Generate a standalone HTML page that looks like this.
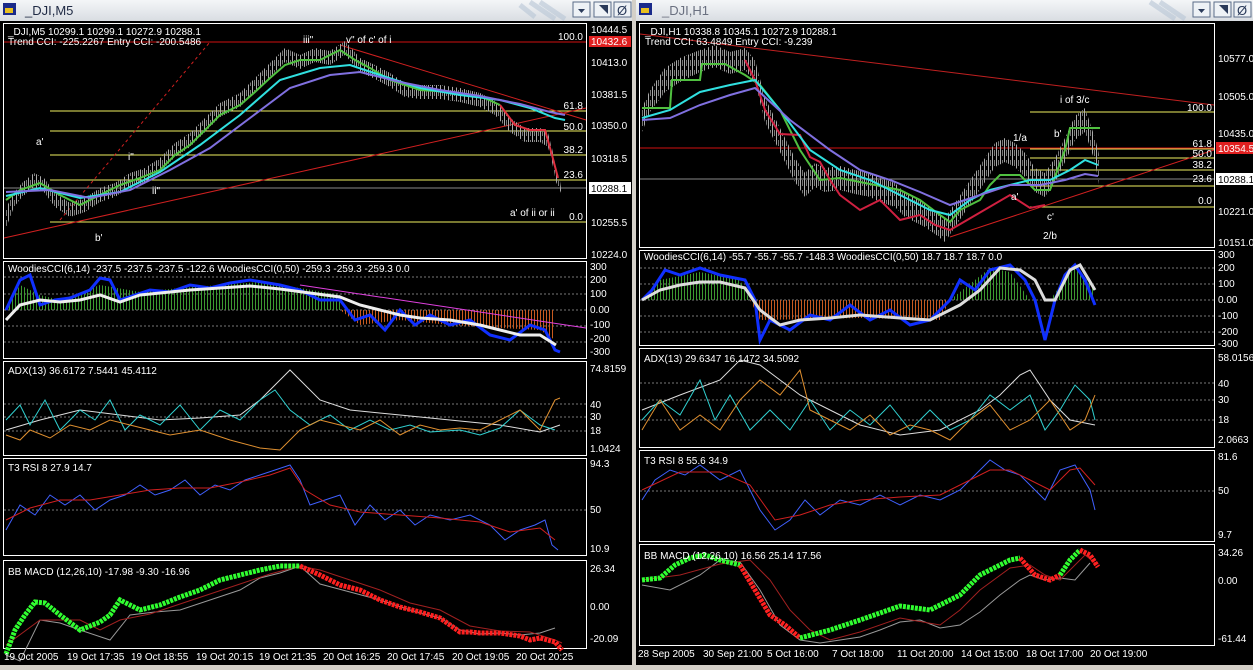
<!DOCTYPE html><html><head><meta charset="utf-8"><style>
body{margin:0;background:#d4d0c8;width:1253px;height:665px;overflow:hidden;font-family:"Liberation Sans",sans-serif}
svg text{font-family:"Liberation Sans",sans-serif;font-size:10px;fill:#fff}
</style></head><body>
<svg width="1253" height="665" viewBox="0 0 1253 665" xmlns="http://www.w3.org/2000/svg">
<defs><linearGradient id="tb" x1="0" y1="0" x2="0" y2="1"><stop offset="0" stop-color="#f4f6f8"/><stop offset="1" stop-color="#d9dde2"/></linearGradient>
<pattern id="pg" width="3" height="10" patternUnits="userSpaceOnUse"><rect width="1" height="10" fill="#3c9a30"/></pattern>
<pattern id="po" width="3" height="10" patternUnits="userSpaceOnUse"><rect width="1" height="10" fill="#c85a20"/></pattern>
<pattern id="pc" width="4" height="10" patternUnits="userSpaceOnUse"><rect width="1" height="10" fill="#aaa"/><rect x="2" y="0" width="1" height="6" fill="#777"/></pattern>
</defs>
<rect x="0" y="0" width="634" height="21" fill="url(#tb)"/>
<rect x="636" y="0" width="617" height="21" fill="url(#tb)"/>
<rect x="3" y="3" width="13" height="12" fill="#1a2a8a"/><rect x="5" y="8" width="8" height="5" fill="#e8c020"/>
<rect x="639" y="3" width="13" height="12" fill="#1a2a8a"/><rect x="641" y="8" width="8" height="5" fill="#e8c020"/>
<text x="25" y="15" style="font-size:13px;fill:#1f2a44">_DJI,M5</text>
<text x="662" y="15" style="font-size:13px;fill:#6a7080">_DJI,H1</text>
<g fill="#eef2f6" stroke="#5a6c88"><rect x="573" y="2" width="17" height="15"/><rect x="594" y="2" width="17" height="15"/><rect x="614" y="2" width="17" height="15"/>
<rect x="1193" y="2" width="17" height="15"/><rect x="1214" y="2" width="17" height="15"/><rect x="1234" y="2" width="17" height="15"/></g>
<g fill="#2a3a5a"><path d="M578 9h7l-3.5 4z"/><path d="M599 5h9v9z" /><path d="M1198 9h7l-3.5 4z"/><path d="M1219 5h9v9z"/></g>
<text x="617" y="15" style="fill:#2a3a5a;font-size:13px">Ø</text><text x="1237" y="15" style="fill:#2a3a5a;font-size:13px">Ø</text>
<path d="M530 2l25 17M540 2l25 17M520 5l15 12" stroke="#b8c6d6" stroke-width="5" opacity=".6"/>
<path d="M1150 2l25 17M1160 2l25 17" stroke="#b8c6d6" stroke-width="5" opacity=".6"/>
<rect x="0" y="21" width="634" height="644" fill="#000"/>
<rect x="636" y="21" width="617" height="644" fill="#000"/>
<rect x="632" y="0" width="4" height="665" fill="#d4d0c8"/>
<g fill="none" stroke="#fff" stroke-width="1">
<rect x="3.5" y="23.5" width="583" height="235"/><rect x="3.5" y="261.5" width="583" height="97"/><rect x="3.5" y="361.5" width="583" height="94"/><rect x="3.5" y="458.5" width="583" height="97"/><rect x="3.5" y="560.5" width="583" height="88"/>
<rect x="639.5" y="23.5" width="575" height="224"/><rect x="639.5" y="250.5" width="575" height="95"/><rect x="639.5" y="348.5" width="575" height="99"/><rect x="639.5" y="450.5" width="575" height="91"/><rect x="639.5" y="544.5" width="575" height="101"/>
</g>
<!-- LEFT MAIN -->
<g stroke-width="1" fill="none">
<line x1="4" y1="42" x2="586" y2="42" stroke="#d01010"/>
<g stroke="#f0f060"><line x1="50" y1="111" x2="586" y2="111"/><line x1="50" y1="131" x2="586" y2="131"/><line x1="50" y1="155" x2="586" y2="155"/><line x1="50" y1="180" x2="586" y2="180"/><line x1="50" y1="222" x2="586" y2="222"/></g>
<line x1="4" y1="188" x2="586" y2="188" stroke="#888"/>
<line x1="4" y1="238" x2="586" y2="108" stroke="#d02020"/>
<line x1="60" y1="220" x2="210" y2="42" stroke="#d02020" stroke-dasharray="3,3"/>
<line x1="340" y1="45" x2="586" y2="120" stroke="#d02020"/>
</g>
<polygon fill="url(#pc)" points="6,208 14,193 22,183 34,173 44,178 55,193 70,203 85,198 100,188 115,183 130,173 145,168 160,158 175,143 190,133 205,118 220,103 240,93 255,78 270,63 285,48 300,55 315,48 330,51 345,41 360,58 375,65 390,73 405,83 420,85 440,85 460,88 480,93 495,101 510,118 525,128 540,128 548,133 552,148 556,168 560,181 562,195 556,182 552,162 548,147 540,142 525,142 510,132 495,115 480,107 460,102 440,99 420,99 405,97 390,87 375,79 360,72 345,55 330,65 315,62 300,69 285,62 270,77 255,92 240,107 220,117 205,132 190,147 175,157 160,172 145,182 130,187 115,197 100,202 85,212 70,217 55,207 44,192 34,187 22,197 14,207 6,228"/>
<g stroke-width="1" fill="none">
<polyline stroke="#50c040" stroke-width="2" points="6,200 20,190 40,183 60,195 80,205 100,195 120,185 140,178 160,170 175,155 190,145 205,130 220,115 240,105 255,92 270,78 285,65 300,60 320,60 340,50 355,60 370,68 390,80 420,90 450,92 480,96 500,105"/>
<polyline stroke="#e03040" stroke-width="2" points="500,105 515,125 530,130 545,130 552,155 558,178"/>
<polyline stroke="#30e0e0" stroke-width="2" points="6,196 40,188 80,198 120,192 160,172 200,145 240,115 280,80 320,68 350,65 380,75 420,88 460,95 500,100 530,108 555,118 565,120"/>
<polyline stroke="#8070e0" stroke-width="2" points="6,192 50,190 90,198 130,190 170,170 210,148 250,118 290,88 330,75 360,72 400,82 440,90 480,96 520,104 550,112 565,115"/>
</g>
<text x="8" y="35">_DJI,M5  10299.1 10299.1 10272.9 10288.1</text>
<text x="8" y="45">Trend CCI: -225.2267 Entry CCI: -200.5486</text>
<g style="font-size:13px;fill:#888"><text x="303" y="43">iii"</text><text x="346" y="43">v" of c' of i</text><text x="36" y="145">a'</text><text x="95" y="241">b'</text><text x="128" y="160">i"</text><text x="152" y="194">ii"</text><text x="510" y="216">a' of ii or ii</text></g>
<g style="font-size:9px" text-anchor="end"><text x="583" y="40">100.0</text><text x="583" y="109">61.8</text><text x="583" y="130">50.0</text><text x="583" y="153">38.2</text><text x="583" y="178">23.6</text><text x="583" y="220">0.0</text></g>
<rect x="589" y="36" width="42" height="11" fill="#e02020"/><rect x="589" y="182" width="42" height="12" fill="#fff"/>
<g style="font-size:10px"><text x="591" y="33">10444.5</text><text x="591" y="45">10432.6</text><text x="591" y="66">10413.0</text><text x="591" y="98">10381.5</text><text x="591" y="129">10350.0</text><text x="591" y="162">10318.5</text><text x="591" y="192" style="fill:#000">10288.1</text><text x="591" y="226">10255.5</text><text x="591" y="258">10224.0</text></g>
<!-- LEFT WOODIES -->
<g stroke="#777" stroke-dasharray="2,2"><line x1="4" y1="277" x2="586" y2="277"/><line x1="4" y1="294" x2="586" y2="294"/><line x1="4" y1="310" x2="586" y2="310"/><line x1="4" y1="326" x2="586" y2="326"/><line x1="4" y1="342" x2="586" y2="342"/></g>
<path d="M6 310L20 285L40 295L60 300L100 285L140 292L180 288L220 285L260 282L300 288L340 295L340 310Z" fill="url(#pg)"/>
<path d="M340 310L360 325L400 320L450 325L500 328L540 330L555 340L555 310Z" fill="url(#po)"/>
<line x1="300" y1="285" x2="586" y2="328" stroke="#e040e0"/>
<polyline fill="none" stroke="#1030ff" stroke-width="3" points="6,310 20,280 30,275 40,305 55,300 70,298 90,290 100,278 110,280 120,300 135,295 150,290 170,292 190,285 210,288 230,283 250,280 280,285 300,290 320,300 340,300 355,320 370,315 385,330 400,310 415,325 430,315 450,325 470,320 490,335 510,340 530,325 545,330 555,350 560,352"/>
<polyline fill="none" stroke="#eee" stroke-width="3" points="6,320 20,305 40,300 60,302 80,300 100,295 120,302 140,295 160,293 190,290 220,288 250,286 280,289 310,293 340,297 360,305 380,310 400,315 420,318 450,320 480,325 500,330 520,335 540,335 556,345"/>
<text x="8" y="272">WoodiesCCI(6,14) -237.5 -237.5 -237.5 -122.6  WoodiesCCI(0,50) -259.3 -259.3 -259.3 0.0</text>
<g style="font-size:9px"><text x="590" y="270">300</text><text x="590" y="283">200</text><text x="590" y="297">100</text><text x="590" y="313">0.00</text><text x="590" y="328">-100</text><text x="590" y="342">-200</text><text x="590" y="355">-300</text></g>
<!-- LEFT ADX -->
<g stroke="#777" stroke-dasharray="2,2"><line x1="4" y1="404" x2="586" y2="404"/><line x1="4" y1="417" x2="586" y2="417"/><line x1="4" y1="431" x2="586" y2="431"/></g>
<polyline fill="none" stroke="#ddd" points="6,430 40,420 80,410 120,415 160,420 200,418 240,415 260,400 275,385 290,370 300,380 320,400 350,410 400,415 450,420 500,425 540,432 560,425"/>
<polyline fill="none" stroke="#30d0d0" points="6,420 20,405 30,425 45,400 60,430 80,410 95,420 110,400 125,430 140,415 160,425 180,405 200,430 220,410 240,420 260,400 275,390 290,410 310,425 330,415 350,430 370,420 390,430 410,425 430,432 460,430 480,435 500,428 520,410 540,425 555,430"/>
<polyline fill="none" stroke="#e09030" points="6,435 20,440 30,430 50,438 70,425 90,430 110,420 130,425 150,430 170,435 200,430 230,440 260,448 280,450 300,430 320,420 340,425 360,430 380,420 400,435 420,425 440,430 460,428 480,430 500,420 520,410 540,430 555,400 560,398"/>
<text x="8" y="374">ADX(13) 36.6172 7.5441 45.4112</text>
<g style="font-size:9px"><text x="590" y="372">74.8159</text><text x="590" y="408">40</text><text x="590" y="420">30</text><text x="590" y="434">18</text><text x="590" y="452">1.0424</text></g>
<!-- LEFT RSI -->
<line x1="4" y1="510" x2="586" y2="510" stroke="#777" stroke-dasharray="2,2"/>
<polyline fill="none" stroke="#4060ff" points="6,530 20,505 35,515 50,495 65,505 80,495 95,510 110,500 125,495 140,485 155,495 170,490 185,480 200,495 215,485 230,490 245,480 260,475 275,470 290,465 300,480 310,505 325,500 340,495 355,525 370,505 385,520 400,510 415,525 430,515 450,520 470,515 490,525 505,540 520,530 535,525 545,520 552,545 558,550"/>
<polyline fill="none" stroke="#d02020" points="6,520 30,508 60,500 90,500 120,495 150,490 180,488 210,488 240,482 270,475 290,468 305,490 330,505 360,512 400,515 440,518 480,522 510,532 540,528 555,540"/>
<text x="8" y="471">T3 RSI 8 27.9 14.7</text>
<g style="font-size:9px"><text x="590" y="467">94.3</text><text x="590" y="513">50</text><text x="590" y="552">10.9</text></g>
<!-- LEFT MACD -->
<polyline fill="none" stroke="#999" points="6,655 20,661 40,620 60,623 80,630 110,640 130,615 155,612 180,610 210,600 240,590 260,578 280,573 300,566 320,584 350,592 380,600 410,610 440,618 460,630 480,634 500,633 520,635 540,633 555,628"/>
<polyline fill="none" stroke="#a02020" points="6,645 40,620 80,620 100,630 120,620 150,614 180,604 210,594 240,584 270,574 300,566 320,570 350,580 380,590 410,603 440,610 470,626 500,631 530,632 555,640 562,643"/>
<polyline fill="none" stroke="#30ff30" stroke-width="5" stroke-dasharray="3,1" points="6,654 15,630 25,615 35,602 45,603 60,615 80,630 100,622 110,615 120,600 130,605 140,610 160,605 180,597 200,590 220,580 240,575 260,570 280,566 300,566"/>
<polyline fill="none" stroke="#ff2020" stroke-width="5" stroke-dasharray="3,1" points="300,566 320,575 340,585 360,590 380,600 400,607 420,612 440,618 460,632 470,632 480,633 500,633 520,636 530,640 540,638 555,642 562,650"/>
<text x="8" y="575">BB MACD (12,26,10) -17.98 -9.30 -16.96</text>
<g style="font-size:9px"><text x="590" y="572">26.34</text><text x="590" y="610">0.00</text><text x="590" y="642">-20.09</text></g>
<g style="font-size:10px"><text x="4" y="660">19 Oct 2005</text><text x="67" y="660">19 Oct 17:35</text><text x="131" y="660">19 Oct 18:55</text><text x="196" y="660">19 Oct 20:15</text><text x="259" y="660">19 Oct 21:35</text><text x="323" y="660">20 Oct 16:25</text><text x="387" y="660">20 Oct 17:45</text><text x="452" y="660">20 Oct 19:05</text><text x="516" y="660">20 Oct 20:25</text></g>
<!-- RIGHT MAIN -->
<line x1="640" y1="34" x2="1214" y2="105" stroke="#c02020"/>
<line x1="640" y1="148" x2="1214" y2="148" stroke="#d01010"/>
<g stroke="#f0f060"><line x1="1030" y1="112" x2="1214" y2="112"/><line x1="1030" y1="149" x2="1214" y2="149"/><line x1="1030" y1="158" x2="1214" y2="158"/><line x1="1030" y1="170" x2="1214" y2="170"/><line x1="1030" y1="186" x2="1214" y2="186"/><line x1="1030" y1="207" x2="1214" y2="207"/></g>
<line x1="640" y1="179" x2="1214" y2="179" stroke="#888"/>
<line x1="950" y1="237" x2="1214" y2="150" stroke="#d02020"/>
<polygon fill="url(#pc)" points="642,108 650,90 665,68 680,58 700,50 715,45 730,52 745,48 755,60 765,98 775,118 785,138 795,158 805,173 815,163 825,168 840,166 855,170 870,173 880,178 895,183 905,193 915,198 925,203 935,210 945,218 955,203 965,188 975,173 985,158 995,143 1005,138 1015,143 1025,153 1035,168 1045,173 1055,158 1065,138 1075,116 1085,108 1090,123 1095,138 1100,158 1100,190 1095,162 1090,147 1085,132 1075,140 1065,162 1055,182 1045,197 1035,192 1025,177 1015,167 1005,162 995,167 985,182 975,197 965,212 955,227 945,242 935,234 925,227 915,222 905,217 895,207 880,202 870,197 855,194 840,190 825,192 815,187 805,197 795,182 785,162 775,142 765,122 755,82 745,70 730,74 715,67 700,72 680,82 665,92 650,112 642,132"/>
<polyline fill="none" stroke="#50c040" stroke-width="2" points="642,108 670,108 672,80 700,80 702,64 725,64 745,75 760,85 780,110 800,150 820,180 840,178 860,182 900,190 920,200 940,215 950,222 960,210 980,200 990,185 1000,175 1020,175 1035,190 1050,190 1065,150 1070,128 1100,128"/>
<polyline fill="none" stroke="#d02040" stroke-width="2" points="745,60 755,80 765,110 780,134 800,135 810,157 820,162 830,180 840,195 860,210 880,200 900,220 920,215 935,225 950,230 1010,195 1030,208 1045,205"/>
<polyline fill="none" stroke="#30e0e0" stroke-width="2" points="642,118 670,110 700,92 730,85 755,80 780,110 810,150 840,170 870,180 900,195 930,210 950,215 970,200 990,190 1010,185 1030,180 1050,180 1070,170 1085,160 1098,165"/>
<polyline fill="none" stroke="#8070e0" stroke-width="2" points="642,120 670,118 700,105 730,95 755,88 790,120 830,150 860,170 890,180 920,192 950,205 980,195 1010,185 1040,185 1065,180 1085,174 1098,176"/>
<text x="645" y="35">_DJI,H1  10338.8 10345.1 10272.9 10288.1</text>
<text x="645" y="45">Trend CCI: 63.4849 Entry CCI: -9.239</text>
<g style="font-size:13px;fill:#888"><text x="1060" y="103">i of 3/c</text><text x="1013" y="141">1/a</text><text x="1054" y="137">b'</text><text x="1011" y="200">a'</text><text x="1047" y="220">c'</text><text x="1043" y="239">2/b</text></g>
<g style="font-size:9px" text-anchor="end"><text x="1212" y="111">100.0</text><text x="1212" y="147">61.8</text><text x="1212" y="157">50.0</text><text x="1212" y="168">38.2</text><text x="1212" y="182">23.6</text><text x="1212" y="204">0.0</text></g>
<rect x="1216" y="142" width="37" height="12" fill="#e02020"/><rect x="1216" y="173" width="37" height="12" fill="#fff"/>
<g style="font-size:10px"><text x="1218" y="62">10577.0</text><text x="1218" y="100">10505.0</text><text x="1218" y="137">10435.0</text><text x="1218" y="152">10354.5</text><text x="1218" y="183" style="fill:#000">10288.1</text><text x="1218" y="215">10221.0</text><text x="1218" y="246">10151.0</text></g>
<!-- RIGHT WOODIES -->
<g stroke="#777" stroke-dasharray="2,2"><line x1="640" y1="268" x2="1214" y2="268"/><line x1="640" y1="284" x2="1214" y2="284"/><line x1="640" y1="300" x2="1214" y2="300"/><line x1="640" y1="316" x2="1214" y2="316"/><line x1="640" y1="332" x2="1214" y2="332"/></g>
<path d="M642 300L660 280L700 272L740 280L750 300Z" fill="url(#pg)"/>
<path d="M950 300L990 268L1010 272L1030 300Z" fill="url(#pg)"/>
<path d="M1050 300L1075 265L1095 290L1095 300Z" fill="url(#pg)"/>
<path d="M750 300L760 320L860 318L940 320L950 300Z" fill="url(#po)"/>
<polyline fill="none" stroke="#1030ff" stroke-width="3" points="642,300 652,290 665,270 680,275 700,268 720,275 745,280 755,300 760,340 770,320 790,330 810,315 830,320 850,305 870,320 890,310 910,325 930,320 950,300 960,280 975,290 990,270 1010,265 1025,280 1035,300 1045,340 1055,300 1065,275 1075,265 1085,280 1095,305"/>
<polyline fill="none" stroke="#ddd" stroke-width="3" points="642,300 660,290 680,285 700,282 720,282 745,288 760,310 780,325 800,320 830,318 860,315 900,318 930,320 960,305 980,290 1000,268 1020,270 1035,280 1045,300 1055,300 1070,270 1080,265 1095,290"/>
<text x="644" y="260">WoodiesCCI(6,14) -55.7 -55.7 -55.7 -148.3  WoodiesCCI(0,50) 18.7 18.7 18.7 0.0</text>
<g style="font-size:9px"><text x="1218" y="258">300</text><text x="1218" y="271">200</text><text x="1218" y="287">100</text><text x="1218" y="303">0.00</text><text x="1218" y="319">-100</text><text x="1218" y="335">-200</text><text x="1218" y="347">-300</text></g>
<!-- RIGHT ADX -->
<g stroke="#777" stroke-dasharray="2,2"><line x1="640" y1="383" x2="1214" y2="383"/><line x1="640" y1="400" x2="1214" y2="400"/><line x1="640" y1="420" x2="1214" y2="420"/></g>
<polyline fill="none" stroke="#ddd" points="642,410 680,395 720,380 740,360 760,365 780,380 800,395 830,410 860,425 900,435 940,430 980,410 1000,395 1020,375 1030,370 1050,400 1070,420 1095,425"/>
<polyline fill="none" stroke="#30d0d0" points="642,420 660,400 680,415 700,380 715,420 730,395 750,430 770,410 790,430 810,400 830,430 850,410 870,425 890,405 910,430 930,410 950,430 970,420 990,395 1010,410 1030,395 1045,430 1060,410 1075,385 1090,400 1095,420"/>
<polyline fill="none" stroke="#e09030" points="642,430 660,400 680,430 700,415 720,430 740,400 760,380 780,395 800,370 810,410 830,420 850,430 870,415 890,435 910,425 930,430 950,440 970,420 990,405 1010,430 1030,420 1050,400 1070,430 1085,420 1095,395"/>
<text x="644" y="362">ADX(13) 29.6347 16.1472 34.5092</text>
<g style="font-size:9px"><text x="1218" y="361">58.0156</text><text x="1218" y="387">40</text><text x="1218" y="403">30</text><text x="1218" y="423">18</text><text x="1218" y="443">2.0663</text></g>
<!-- RIGHT RSI -->
<line x1="640" y1="491" x2="1214" y2="491" stroke="#777" stroke-dasharray="2,2"/>
<polyline fill="none" stroke="#4060ff" points="642,500 655,480 670,470 685,475 700,465 720,480 740,470 760,510 775,530 790,520 805,500 820,515 840,500 860,505 880,495 900,505 920,495 940,500 960,490 975,475 990,460 1005,470 1020,475 1035,490 1045,500 1060,470 1075,465 1090,490 1095,510"/>
<polyline fill="none" stroke="#d02020" points="642,490 680,472 720,472 750,485 775,520 800,515 830,505 860,500 900,497 940,495 970,480 990,470 1010,470 1030,480 1050,490 1070,470 1080,468 1095,485"/>
<text x="644" y="464">T3 RSI 8 55.6 34.9</text>
<g style="font-size:9px"><text x="1218" y="460">81.6</text><text x="1218" y="494">50</text><text x="1218" y="538">9.7</text></g>
<!-- RIGHT MACD -->
<polyline fill="none" stroke="#999" points="642,585 670,590 700,575 720,560 740,562 760,590 780,625 800,640 820,643 840,640 860,637 880,630 900,622 920,620 940,628 960,625 980,612 1000,595 1020,580 1030,575 1045,580 1060,578 1075,580 1090,563"/>
<polyline fill="none" stroke="#a02020" points="642,580 680,575 720,564 750,560 770,580 790,610 810,630 830,640 860,632 900,618 940,625 960,610 980,590 1010,568 1030,565 1045,575 1060,580 1070,570 1085,555 1095,563"/>
<polyline fill="none" stroke="#30ff30" stroke-width="5" stroke-dasharray="3,1" points="642,580 660,578 675,565 690,558 705,555 720,560 740,565"/>
<polyline fill="none" stroke="#ff2020" stroke-width="5" stroke-dasharray="3,1" points="740,565 755,590 770,615 785,625 800,638"/>
<polyline fill="none" stroke="#30ff30" stroke-width="5" stroke-dasharray="3,1" points="800,638 830,630 860,620 900,606 930,610 960,595 980,575 1010,560 1020,558"/>
<polyline fill="none" stroke="#ff2020" stroke-width="5" stroke-dasharray="3,1" points="1020,558 1035,575 1050,580 1060,575"/>
<polyline fill="none" stroke="#30ff30" stroke-width="5" stroke-dasharray="3,1" points="1060,575 1070,560 1080,550"/>
<polyline fill="none" stroke="#ff2020" stroke-width="5" stroke-dasharray="3,1" points="1080,550 1090,555 1098,567"/>
<text x="644" y="559">BB MACD (12,26,10) 16.56 25.14 17.56</text>
<g style="font-size:9px"><text x="1218" y="556">34.26</text><text x="1218" y="584">0.00</text><text x="1218" y="642">-61.44</text></g>
<g style="font-size:10px"><text x="638" y="657">28 Sep 2005</text><text x="703" y="657">30 Sep 21:00</text><text x="767" y="657">5 Oct 16:00</text><text x="832" y="657">7 Oct 18:00</text><text x="897" y="657">11 Oct 20:00</text><text x="961" y="657">14 Oct 15:00</text><text x="1026" y="657">18 Oct 17:00</text><text x="1090" y="657">20 Oct 19:00</text></g>
</svg>
</body></html>
